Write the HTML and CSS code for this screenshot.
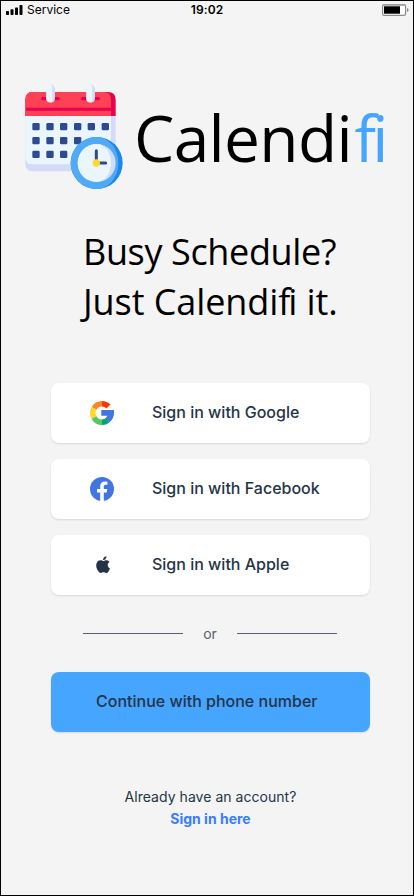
FILE: index.html
```html
<!DOCTYPE html>
<html lang="en">
<head>
<meta charset="utf-8">
<title>Calendifi</title>
<link rel="stylesheet" href="styles.css">
</head>
<body>
<div class="screen">
  <header class="status">
    <div class="carrier">
      <svg width="17" height="10" viewBox="0 0 17 10"><rect x="0" y="6" width="3" height="4" rx=".8"/><rect x="4.5" y="4.2" width="3" height="5.8" rx=".8"/><rect x="9" y="2.4" width="3" height="7.6" rx=".8"/><rect x="13.5" y="0" width="3" height="10" rx=".8"/></svg>
      <span>Service</span>
    </div>
    <div class="time">19:02</div>
    <svg class="battery" width="28" height="12" viewBox="0 0 28 12"><rect x=".6" y=".6" width="23" height="10.8" rx="1.6" fill="#fff" stroke="#8b8b8b" stroke-width="1.2"/><path d="M1 1.1h22" stroke="#aaa" stroke-width="1.6"/><rect x="2" y="2.3" width="16" height="7.4" fill="#000"/><path d="M25 4q1.6.5 1.6 2T25 8z" fill="#888"/></svg>
  </header>
  <main>
    <div class="brand">
      <svg class="logo" width="98" height="106" viewBox="30 27 294 318">
        <path d="M31 110h271v156q0 23-23 23H54q-23 0-23-23z" fill="#d4dbf9"/>
        <path d="M31 110h257v136q0 22-22 22H54q-23 0-23-23z" fill="#eaf5fc"/>
        <path d="M54 51h225q23 0 23 23v49H31V74q0-23 23-23z" fill="#e9004f"/>
        <path d="M54 51h212q22 0 22 23v24H31V74q0-23 23-23z" fill="#ff4155"/>
        <path d="M31 107h257v16H31z" fill="#ff4155"/>
        <path d="M83 71h47M203 71h47" stroke="#e9004f" stroke-width="10" stroke-linecap="round"/>
        <rect x="94" y="29" width="26" height="54" rx="13" fill="#d4dbf9"/>
        <rect x="214" y="29" width="26" height="54" rx="13" fill="#d4dbf9"/>
        <rect x="94" y="29" width="18" height="52" rx="9" fill="#eaf5fc"/>
        <rect x="214" y="29" width="18" height="52" rx="9" fill="#eaf5fc"/>
        <g fill="#2e4a91"><rect x="52" y="144" width="22" height="22" rx="4"/><rect x="94" y="144" width="22" height="22" rx="4"/><rect x="135" y="144" width="22" height="22" rx="4"/><rect x="177" y="144" width="22" height="22" rx="4"/><rect x="218" y="144" width="22" height="22" rx="4"/><rect x="260" y="144" width="22" height="22" rx="4"/><rect x="52" y="186" width="22" height="22" rx="4"/><rect x="94" y="186" width="22" height="22" rx="4"/><rect x="135" y="186" width="22" height="22" rx="4"/><rect x="177" y="186" width="22" height="22" rx="4"/><rect x="52" y="227" width="22" height="22" rx="4"/><rect x="94" y="227" width="22" height="22" rx="4"/><rect x="135" y="227" width="22" height="22" rx="4"/></g>
        <circle cx="245" cy="264" r="78" fill="#1e87ea"/>
        <path d="M245 186a78 78 0 1 0 0 156a65 78 0 0 0 0-156z" fill="#4fabf7"/>
        <circle cx="245" cy="264" r="57" fill="#d4dbf9"/>
        <path d="M245 207a57 57 0 1 0 0 114a43 57 0 0 0 0-114z" fill="#eaf5fc"/>
        <path d="M244 227v37h28" fill="none" stroke="#2e4a91" stroke-width="9" stroke-linecap="round"/>
        <circle cx="244" cy="264" r="11" fill="#ffda2d"/>
      </svg>
      <div class="wordmark">Calendi<span>fi</span></div>
    </div>
    <h1><span class="line-a">Busy Schedule?</span><span class="line-b">Just Calendi<b>f</b>i it.</span></h1>
    <div class="options">
      <button class="option">
        <svg width="24" height="24" viewBox="0 0 24 24"><g fill="none" stroke-width="5.6"><path d="M12 2.8A9.2 9.2 0 0 1 18.5 5.5" stroke="#f93a00"/><path d="M4.03 7.4A9.2 9.2 0 0 1 12 2.8" stroke="#ff8426"/><path d="M4.03 16.6a9.2 9.2 0 0 1 0-9.2" stroke="#ffd82f"/><path d="M12 21.2a9.2 9.2 0 0 1-7.97-4.6" stroke="#57c766"/><path d="M12 21.2a9.2 9.2 0 0 0 5.7-2" stroke="#00a66c"/></g><path d="M11.3 9.1H24V12c0 4-1.7 7-4.5 9.2L15.4 17a6.8 6.8 0 0 0 2.1-2.3h-6.2z" fill="#4175df"/></svg>
        <span>Sign in with Google</span>
      </button>
      <button class="option">
        <svg width="24" height="24" viewBox="0 0 24 24"><circle cx="12" cy="12" r="12" fill="#4175df"/><path d="M10.2 24v-8.5H7v-3.6h3.2V9.2c0-3.1 1.8-4.8 4.6-4.8.9 0 1.8.1 2.6.3v3h-1.6c-1.5 0-2 .9-2 1.9v2.3h3.4l-.5 3.6h-2.9V24z" fill="#fff"/></svg>
        <span>Sign in with Facebook</span>
      </button>
      <button class="option">
        <svg width="24" height="24" viewBox="0 0 24 24"><g transform="translate(4.7 3.2) scale(.7)" fill="#243447"><path d="M12.152 6.896c-.948 0-2.415-1.078-3.96-1.04-2.04.027-3.91 1.183-4.961 3.014-2.117 3.675-.546 9.103 1.519 12.09 1.013 1.454 2.208 3.09 3.792 3.039 1.52-.065 2.09-.987 3.935-.987 1.831 0 2.35.987 3.96.948 1.637-.026 2.676-1.48 3.676-2.948 1.156-1.688 1.636-3.325 1.662-3.415-.039-.013-3.182-1.221-3.22-4.857-.026-3.04 2.48-4.494 2.597-4.559-1.429-2.09-3.623-2.324-4.39-2.376-2-.156-3.675 1.09-4.61 1.09zM15.53 3.83c.843-1.012 1.4-2.427 1.245-3.83-1.207.052-2.662.805-3.532 1.818-.78.896-1.454 2.338-1.273 3.714 1.338.104 2.715-.688 3.559-1.701"/></g></svg>
        <span>Sign in with Apple</span>
      </button>
    </div>
    <div class="divider"><i></i><span>or</span><i></i></div>
    <button class="phone">Continue with phone number</button>
    <footer><p>Already have an account?</p><a>Sign in here</a></footer>
  </main>
</div>
</body>
</html>
```
FILE: styles.css
```css
* { box-sizing: border-box; margin: 0; padding: 0; }
body { background: #f4f4f4; font-family: Inter, sans-serif; color: #243447; }
.screen { width: 414px; height: 896px; border: 1px solid #000; overflow: hidden; background: #f4f4f4; }
svg { display: block; flex: none; }
.status { display: grid; grid-template-columns: 1fr auto 1fr; align-items: center; height: 18px; padding: 0 3px 0 5px; color: #000; font-size: 12px; line-height: 18px; }
.carrier { display: flex; align-items: center; gap: 4px; }
.time { font-weight: 600; letter-spacing: .1px; margin-right: 2px; }
.battery { justify-self: end; }
.brand { display: flex; height: 106px; margin: 65px 0 0 24px; }
.wordmark { margin-left: 11px; font: 400 64px/107px "Open Sans", sans-serif; letter-spacing: -.65px; color: #000; white-space: nowrap; }
.wordmark span { margin-left: 2.5px; letter-spacing: -3.7px; color: #45a5ff; }
h1 { margin: 37px 0 0 82px; color: #000; font: 400 36px/50px "Open Sans", sans-serif; white-space: nowrap; }
h1 span { display: block; }
h1 b { font-weight: 400; letter-spacing: -2px; }
.line-a { letter-spacing: -.36px; }
.line-b { letter-spacing: -.09px; }
.options { display: grid; gap: 16px; margin: 56px 0 0 50px; width: 319px; }
button { border: 0; border-radius: 8px; height: 60px; width: 319px; font: 500 16px/24px Inter, sans-serif; color: #243447; box-shadow: 0 1px 2px rgba(0,0,0,.12); }
.option { display: flex; align-items: center; gap: 38px; padding: 0 39px; background: #fff; text-align: left; }
.option span { padding-bottom: 2px; }
.divider { display: flex; align-items: center; justify-content: space-between; width: 254px; height: 20px; margin: 28px 0 0 82px; font-size: 14px; line-height: 20px; color: #57606f; }
.divider span { padding-top: 2px; }
.divider i { width: 100px; height: 1px; background: #57606f; }
.phone { display: block; margin: 29px 0 0 50px; padding: 0 0 2px 45px; background: #45a5ff; text-align: left; }
footer { margin: 54px 0 0; padding-left: 7px; text-align: center; font-size: 14px; line-height: 22px; }
footer p { letter-spacing: .04px; }
footer a { display: block; font-weight: 700; color: #377dff; }
```
